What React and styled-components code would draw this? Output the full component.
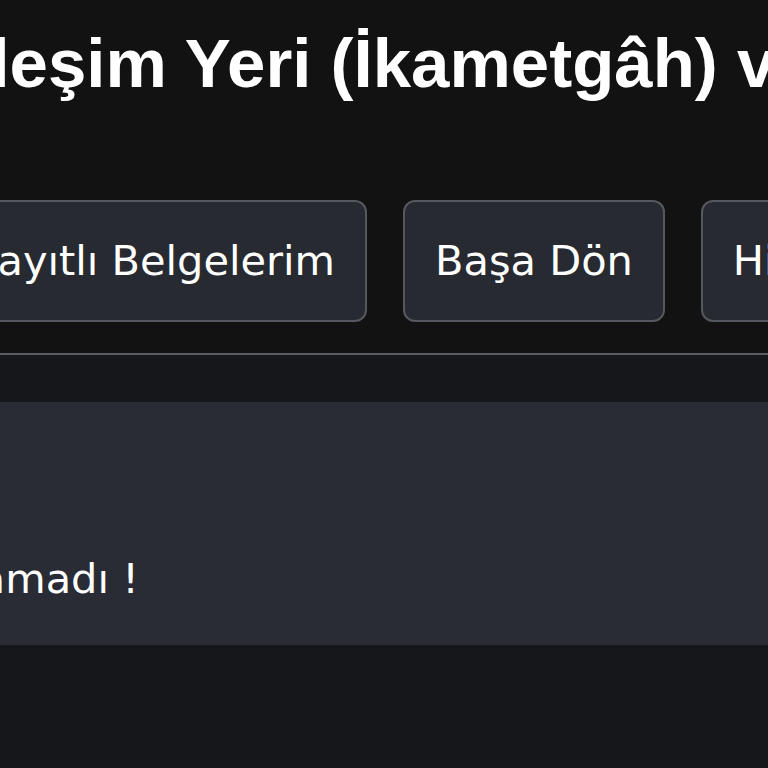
import React from 'react';
import styled, { createGlobalStyle } from 'styled-components';

const GlobalStyle = createGlobalStyle`
    html, body {
        margin: 0;
        padding: 0;
        background-color: #16171b;
        overflow: hidden;
    }

    #root {
        min-height: 100vh;
    }
`

// the view is scrolled sideways, so the page starts left of the frame
const Page = styled.div`
    display: flex;
    flex-direction: column;
    width: 1800px;
    min-height: 100vh;
    margin-left: -420px;
    font-family: "DejaVu Sans", sans-serif;
    color: #ffffff;
`

const Header = styled.header`
    display: flex;
    flex-direction: column;
    padding-top: 25px;
    padding-bottom: 31px;
    background-color: #121212;
    border-bottom: 2px solid #5c5d61;
`

const Title = styled.h1`
    margin: 0 0 98px 0;
    padding-left: 303px;
    font-family: "Liberation Sans", Arial, sans-serif;
    font-size: 69px;
    font-weight: 700;
    line-height: 77px;
    white-space: nowrap;
`

const Actions = styled.nav`
    display: flex;
    gap: 36px;
    padding-left: 359px;
`

const Button = styled.button`
    display: flex;
    height: 122px;
    align-items: center;
    padding: 0 30px;
    font-family: inherit;
    font-size: 41.5px;
    line-height: 48px;
    color: #ffffff;
    white-space: nowrap;
    background-color: #272a31;
    border: 2px solid #55585e;
    border-radius: 12px;
`

const Main = styled.main`
    display: flex;
    flex-direction: column;
    flex-grow: 1;
    padding-top: 47px;
    background-color: #16171b;
`

const Panel = styled.section`
    display: flex;
    padding: 153px 0 42px 14px;
    background-color: #292c34;
`

const Message = styled.p`
    margin: 0;
    font-size: 41.5px;
    line-height: 48px;
    white-space: nowrap;
`

const buttons = ['Kayıtlı Belgelerim', 'Başa Dön', 'Hizmetler'];

const App = () => {
    return (
        <>
            <GlobalStyle />
            <Page>
                <Header>
                    <Title>Yerleşim Yeri (İkametgâh) ve Diğer Adres Belgesi Sorgulama</Title>
                    <Actions>
                        {buttons.map(b => <Button key={b}>{b}</Button>)}
                    </Actions>
                </Header>
                <Main>
                    <Panel>
                        <Message>Kayıtlı belge bulunamadı !</Message>
                    </Panel>
                </Main>
            </Page>
        </>
    );
}

export default App;
